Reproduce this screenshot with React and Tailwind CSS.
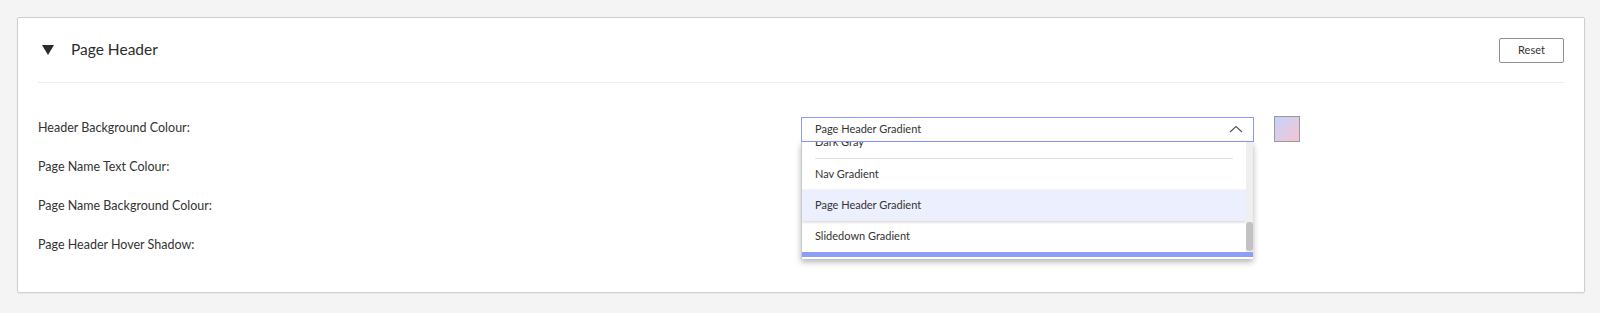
import React from 'react';

const rows = [
  'Header Background Colour:',
  'Page Name Text Colour:',
  'Page Name Background Colour:',
  'Page Header Hover Shadow:',
];

const options = ['Nav Gradient', 'Page Header Gradient', 'Slidedown Gradient'];

const ColourSelect = () => {
  return (
    <div className="flex items-center gap-5">
      <div className="relative w-[453px]">
        <button className="flex h-[25px] w-full items-center justify-between border border-[#8c9cf6] bg-white pl-[13px] pr-[10px] text-[11px] text-[#333]">
          <span>Page Header Gradient</span>
          <svg width="14" height="8" viewBox="0 0 14 8" fill="none" stroke="#555" strokeWidth="1.1">
            <path d="M1 7L7 1.5L13 7" />
          </svg>
        </button>

        {/* open menu */}
        <div className="absolute left-0 top-[25px] z-10 h-[117px] w-[452px] overflow-hidden border-l border-[#c9c9c9] bg-white shadow-[0_3px_6px_rgba(0,0,0,0.3)]">
          <div className="flex">
            <div className="flex-1">
              <div className="-mt-[9px] h-[17px] px-[13px] text-[11px] leading-[17px] text-[#333]">Dark Gray</div>
              <div className="mx-[13px] mt-[8px] border-t border-[#e3e3e3]"></div>
              <ul className="text-[11px] text-[#333]">
                {options.map((opt) => (
                  <li
                    key={opt}
                    className={`flex h-[31px] items-center px-[13px] ${
                      opt === 'Page Header Gradient'
                        ? 'bg-[#eceffd] shadow-[0_1px_3px_rgba(0,0,0,0.2)]'
                        : ''
                    }`}
                  >
                    {opt}
                  </li>
                ))}
              </ul>
            </div>
            <div className="w-[7px] bg-[#efefef] pt-[80px]">
              <div className="h-[29px] rounded-[3px] bg-[#c2c2c2]"></div>
            </div>
          </div>
          <div className="absolute bottom-[2px] left-0 h-[5px] w-full bg-[#8c9ef6]"></div>
        </div>
      </div>
      <div className="h-[26px] w-[26px] border border-[#9a9a9a] bg-gradient-to-br from-[#c3d2fb] to-[#f5c4d4]"></div>
    </div>
  );
};

export default function App() {
  return (
    <div className="min-h-[313px] bg-[#f4f4f4] pb-[17px] pl-[17px] pr-[15px] pt-[17px] font-['Lato',sans-serif]">
      <div className="h-[276px] rounded-[2px] border border-[#cfcfcf] bg-white px-[20px] shadow-[0_1px_2px_rgba(0,0,0,0.06)]">
        {/* Header */}
        <div className="flex h-[65px] items-center justify-between border-b border-[#ececec]">
          <div className="flex items-center">
            <svg className="ml-[4px]" width="12" height="10" viewBox="0 0 12 10">
              <path d="M0 0H12L6 10Z" fill="#2b2b2b" />
            </svg>
            <h2 className="ml-[17px] text-[15.5px] text-[#2b2b2b]">Page Header</h2>
          </div>
          <button className="h-[25px] w-[65px] rounded-[2px] border border-[#8f8f8f] text-[11px] text-[#333]">
            Reset
          </button>
        </div>

        {/* Settings */}
        <div className="grid grid-cols-2 pt-[33px]">
          <div className="flex flex-col gap-[14px]">
            {rows.map((label) => (
              <div key={label} className="flex h-[25px] items-center text-[12.5px] text-[#333]">
                {label}
              </div>
            ))}
          </div>
          <div>
            <ColourSelect />
          </div>
        </div>
      </div>
    </div>
  );
}
